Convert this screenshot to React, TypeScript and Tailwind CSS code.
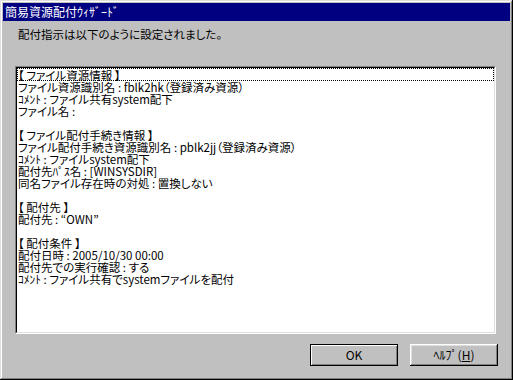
import React from 'react';

const lines: string[] = [
    '【 ファイル資源情報 】',
    'ファイル資源識別名 : fblk2hk（登録済み資源）',
    'ｺﾒﾝﾄ : ファイル共有system配下',
    'ファイル名 :',
    '',
    '【 ファイル配付手続き情報 】',
    'ファイル配付手続き資源識別名 : pblk2jj（登録済み資源）',
    'ｺﾒﾝﾄ : ファイルsystem配下',
    '配付先ﾊﾟｽ名 : [WINSYSDIR]',
    '同名ファイル存在時の対処 : 置換しない',
    '',
    '【 配付先 】',
    '配付先 : “OWN”',
    '',
    '【 配付条件 】',
    '配付日時 : 2005/10/30 00:00',
    '配付先での実行確認 : する',
    'ｺﾒﾝﾄ : ファイル共有でsystemファイルを配付',
];

const App: React.FC = () => {
    return (
        <div className="w-[513px] h-[380px] bg-[#c0c0c0] p-[3px] flex flex-col font-['Noto_Sans_CJK_JP',sans-serif] text-[12px] text-black shadow-[inset_-1px_-1px_#000,inset_1px_1px_#dfdfdf,inset_-2px_-2px_#808080,inset_2px_2px_#fff]">
            {/* title bar */}
            <div className="h-[18px] bg-[#000080] text-white pl-[2px] flex items-center leading-[18px]">
                簡易資源配付ｳｨｻﾞｰﾄﾞ
            </div>

            <div className="flex-1 flex flex-col px-[12px]">
                <p className="mt-[7px] ml-[3px] text-[11.5px] leading-[12px] [font-feature-settings:'palt']">配付指示は以下のように設定されました。</p>

                {/* summary box */}
                <div className="mt-[26px] w-[481px] h-[268px] bg-white border-[1px] border-t-[#808080] border-l-[#808080] border-b-white border-r-white">
                    <div className="h-full border-[1px] border-t-black border-l-black border-b-[#dfdfdf] border-r-[#dfdfdf] text-[11.5px] leading-[12px] [font-feature-settings:'palt']">
                        {lines.map((line, i) => (
                            <div
                                key={i}
                                className={
                                    i === 0
                                        ? 'h-[13px] pl-[1px] pt-[1px] outline-1 outline-dotted outline-black -outline-offset-1 whitespace-pre'
                                        : 'h-[12px] pl-[1px] whitespace-pre'
                                }
                            >
                                {line}
                            </div>
                        ))}
                    </div>
                </div>

                {/* buttons */}
                <div className="mt-[10px] flex justify-end gap-[12px]">
                    <button className="w-[88px] h-[22px] bg-[#c0c0c0] border border-black shadow-[inset_1px_1px_#fff,inset_-1px_-1px_#808080] leading-[12px]">
                        OK
                    </button>
                    <button className="w-[88px] h-[22px] bg-[#c0c0c0] shadow-[inset_-1px_-1px_#000,inset_1px_1px_#fff,inset_-2px_-2px_#808080,inset_2px_2px_#dfdfdf] leading-[12px]">
                        ﾍﾙﾌﾟ(<span className="underline">H</span>)
                    </button>
                </div>
            </div>
        </div>
    );
};

export default App;
